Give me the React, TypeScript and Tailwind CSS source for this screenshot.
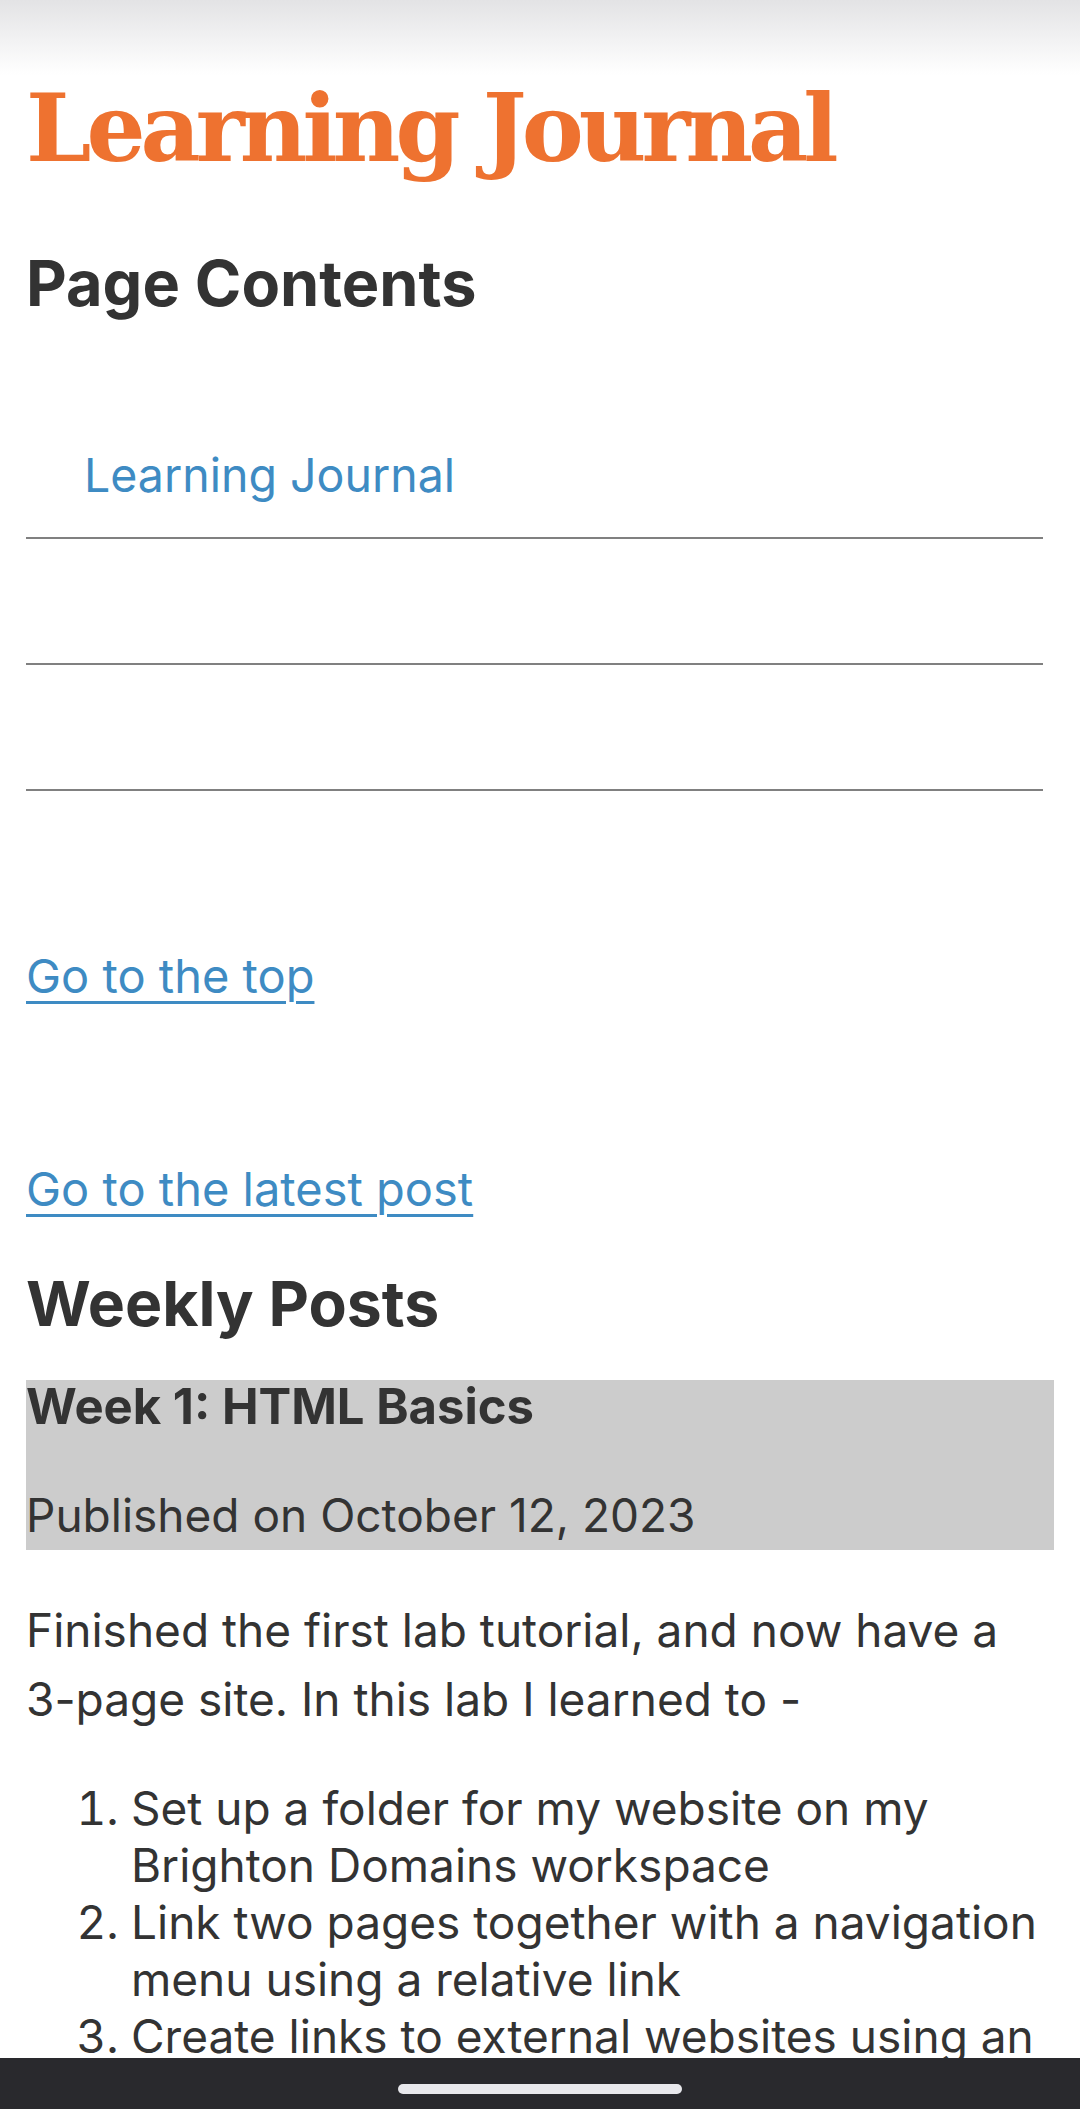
import React from "react";

const linkCls = "text-[#3e8bc3]";

export default function App() {
  return (
    <div className="flex h-[2109px] w-[1080px] flex-col overflow-hidden bg-white font-['Inter',sans-serif] text-[#333333]">
      <main className="min-h-0 flex-1 overflow-hidden bg-[linear-gradient(to_bottom,#e3e3e5_0px,#ffffff_75px)] px-[26px] pt-[82px]">
        <h1 className="font-['DejaVu_Serif',serif] text-[93px] font-bold leading-[93px] tracking-[-5px] text-[#ee7230]">
          Learning Journal
        </h1>

        <h2 className="mt-[71px] text-[63px] font-bold leading-[75px]">Page Contents</h2>

        <nav className="mr-[11px] mt-[92px]">
          <ul>
            <li className="flex h-[126px] items-center border-b-2 border-[#808080] pl-[58px]">
              <a href="#top" className={`text-[46.5px] leading-[70px] ${linkCls}`}>
                Learning Journal
              </a>
            </li>
            <li className="h-[126px] border-b-2 border-[#808080]" />
            <li className="h-[126px] border-b-2 border-[#808080]" />
          </ul>
        </nav>

        <p className="mt-[150px] text-[47px] leading-[70px]">
          <a href="#top" className={`underline decoration-[3px] underline-offset-[8px] ${linkCls}`}>
            Go to the top
          </a>
        </p>

        <p className="mt-[143px] text-[47px] leading-[70px]">
          <a href="#latest" className={`underline decoration-[3px] underline-offset-[8px] ${linkCls}`}>
            Go to the latest post
          </a>
        </p>

        <h2 className="mt-[42px] text-[62.5px] font-bold leading-[75px]">Weekly Posts</h2>

        <article>
          <header className="mt-[39px] w-[1028px] bg-[#cccccc] pt-[2px]">
            <h3 className="text-[49px] font-bold leading-[49px]">Week 1: HTML Basics</h3>
            <p className="mt-[50px] text-[46px] leading-[69px]">Published on October 12, 2023</p>
          </header>

          <p className="mt-[46px] text-[46px] leading-[69px]">
            Finished the first lab tutorial, and now have a 3-page site. In this lab I learned to -
          </p>

          <ol className="mt-[46px] list-decimal pl-[105px] text-[46px] leading-[57px]">
            <li>Set up a folder for my website on my Brighton Domains workspace</li>
            <li>Link two pages together with a navigation menu using a relative link</li>
            <li>Create links to external websites using an absolute link</li>
          </ol>
        </article>
      </main>

      <div className="flex h-[51px] shrink-0 justify-center bg-[#29292d] pt-[26px]">
        <div className="h-[10px] w-[284px] rounded-full bg-[#e8e8ec]" />
      </div>
    </div>
  );
}
